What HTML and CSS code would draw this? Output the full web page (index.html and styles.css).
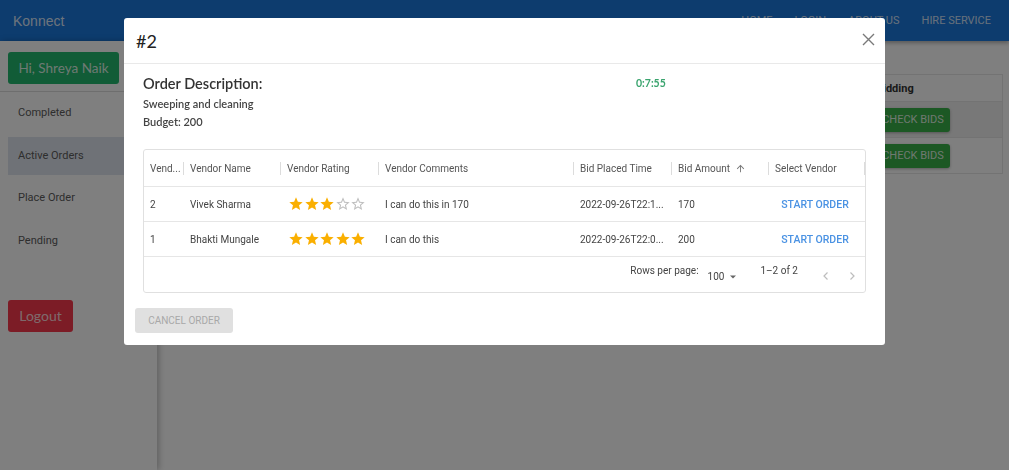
FILE: index.html
```html
<!DOCTYPE html>
<html>
<head>
<meta charset="utf-8">
<link rel="stylesheet" href="styles.css">
</head>
<body>
<header class="navbar">
  <div class="brand">Konnect</div>
  <nav class="links">
    <span>HOME</span><span>LOGIN</span><span>ABOUT US</span><span>HIRE SERVICE</span>
  </nav>
</header>
<div class="page">
  <aside class="sidebar">
    <div class="greet-wrap"><button class="greet">Hi, Shreya Naik</button></div>
    <ul class="menu">
      <li>Completed</li>
      <li class="active">Active Orders</li>
      <li>Place Order</li>
      <li>Pending</li>
    </ul>
    <button class="logout">Logout</button>
  </aside>
  <main class="main">
    <div class="orders">
      <div class="orow ohead"><span></span><span class="bidcol">Bidding</span></div>
      <div class="orow hover"><span></span><span class="bidcol"><button class="check">CHECK BIDS</button></span></div>
      <div class="orow"><span></span><span class="bidcol"><button class="check">CHECK BIDS</button></span></div>
    </div>
  </main>
</div>

<div class="overlay"></div>
<div class="modal">
  <div class="mhead">
    <h2>#2</h2>
    <svg class="close" width="13" height="13" viewBox="0 0 13 13"><path d="M1 1L12 12M12 1L1 12" stroke="#7a7a7a" stroke-width="1.4"/></svg>
  </div>
  <div class="mbody">
    <div class="titlerow">
      <h3>Order Description:</h3>
      <span class="timer">0:7:55</span>
    </div>
    <p class="info">Sweeping and cleaning</p>
    <p class="info">Budget: 200</p>

    <div class="grid">
      <div class="gr ghead">
        <div class="c">Vend...</div>
        <div class="c">Vendor Name</div>
        <div class="c">Vendor Rating</div>
        <div class="c">Vendor Comments</div>
        <div class="c">Bid Placed Time</div>
        <div class="c">Bid Amount <svg class="sort" width="11" height="11" viewBox="0 0 24 24"><path d="M4 12l1.41 1.41L11 7.830V20h2V7.83l5.58 5.59L20 12l-8-8-8 8z" fill="#777"/></svg></div>
        <div class="c">Select Vendor</div>
      </div>
      <div class="gr">
        <div class="c">2</div>
        <div class="c">Vivek Sharma</div>
        <div class="c stars">
          <svg viewBox="0 0 24 24"><path class="on" d="M12 17.27L18.18 21l-1.64-7.03L22 9.24l-7.19-.61L12 2 9.19 8.63 2 9.24l5.46 4.73L5.82 21z"/></svg>
          <svg viewBox="0 0 24 24"><path class="on" d="M12 17.27L18.18 21l-1.64-7.03L22 9.24l-7.19-.61L12 2 9.19 8.63 2 9.24l5.46 4.73L5.82 21z"/></svg>
          <svg viewBox="0 0 24 24"><path class="on" d="M12 17.27L18.18 21l-1.64-7.03L22 9.24l-7.19-.61L12 2 9.19 8.63 2 9.24l5.46 4.73L5.82 21z"/></svg>
          <svg viewBox="0 0 24 24"><path class="off" d="M22 9.24l-7.19-.62L12 2 9.19 8.63 2 9.24l5.46 4.73L5.82 21 12 17.27 18.18 21l-1.63-7.03L22 9.24zM12 15.4l-3.76 2.27 1-4.28-3.32-2.88 4.38-.38L12 6.1l1.71 4.04 4.38.38-3.32 2.88 1 4.28L12 15.4z"/></svg>
          <svg viewBox="0 0 24 24"><path class="off" d="M22 9.24l-7.19-.62L12 2 9.19 8.63 2 9.24l5.46 4.73L5.82 21 12 17.27 18.18 21l-1.63-7.03L22 9.24zM12 15.4l-3.76 2.27 1-4.28-3.32-2.88 4.38-.38L12 6.1l1.71 4.04 4.38.38-3.32 2.88 1 4.28L12 15.4z"/></svg>
        </div>
        <div class="c">I can do this in 170</div>
        <div class="c">2022-09-26T22:1...</div>
        <div class="c">170</div>
        <div class="c center"><span class="start">START ORDER</span></div>
      </div>
      <div class="gr">
        <div class="c">1</div>
        <div class="c">Bhakti Mungale</div>
        <div class="c stars">
          <svg viewBox="0 0 24 24"><path class="on" d="M12 17.27L18.18 21l-1.64-7.03L22 9.24l-7.19-.61L12 2 9.19 8.63 2 9.24l5.46 4.73L5.82 21z"/></svg>
          <svg viewBox="0 0 24 24"><path class="on" d="M12 17.27L18.18 21l-1.64-7.03L22 9.24l-7.19-.61L12 2 9.19 8.63 2 9.24l5.46 4.73L5.82 21z"/></svg>
          <svg viewBox="0 0 24 24"><path class="on" d="M12 17.27L18.18 21l-1.64-7.03L22 9.24l-7.19-.61L12 2 9.19 8.63 2 9.24l5.46 4.73L5.82 21z"/></svg>
          <svg viewBox="0 0 24 24"><path class="on" d="M12 17.27L18.18 21l-1.64-7.03L22 9.24l-7.19-.61L12 2 9.19 8.63 2 9.24l5.46 4.73L5.82 21z"/></svg>
          <svg viewBox="0 0 24 24"><path class="on" d="M12 17.27L18.18 21l-1.64-7.03L22 9.24l-7.19-.61L12 2 9.19 8.63 2 9.24l5.46 4.73L5.82 21z"/></svg>
        </div>
        <div class="c">I can do this</div>
        <div class="c">2022-09-26T22:0...</div>
        <div class="c">200</div>
        <div class="c center"><span class="start">START ORDER</span></div>
      </div>
      <div class="gfoot">
        <span class="rpp">Rows per page:</span>
        <span class="sel">100 <svg width="8" height="8" viewBox="0 0 8 8"><path d="M1 2.5h6L4 5.5z" fill="#666"/></svg></span>
        <span class="range">1–2 of 2</span>
        <span class="pager">
          <svg width="10" height="10" viewBox="0 0 10 10"><path d="M6.5 1.5L3 5l3.5 3.5" fill="none" stroke="#bdbdbd" stroke-width="1.2"/></svg>
          <svg width="10" height="10" viewBox="0 0 10 10"><path d="M3.5 1.5L7 5 3.5 8.5" fill="none" stroke="#bdbdbd" stroke-width="1.2"/></svg>
        </span>
      </div>
    </div>
  </div>
  <div class="mfoot">
    <button class="cancel" disabled>CANCEL ORDER</button>
  </div>
</div>
</body>
</html>
```

FILE: styles.css
```css
* { box-sizing: border-box; }
html, body { margin: 0; padding: 0; }
body {
  width: 1009px;
  height: 470px;
  overflow: hidden;
  background: #ffffff;
  font-family: Roboto, "Liberation Sans", Arial, sans-serif;
}
.navbar {
  height: 41px;
  background: #1a78dc;
  display: flex;
  align-items: center;
  justify-content: space-between;
  padding: 0 18px 0 13px;
  box-shadow: 0 2px 4px rgba(0,0,0,0.3);
  position: relative;
  z-index: 1;
}
.brand {
  color: rgba(255,255,255,0.85);
  font-size: 14px;
  font-family: "Liberation Sans", Arial, sans-serif;
}
.links { display: flex; gap: 22px; }
.links span {
  color: rgba(255,255,255,0.8);
  font-size: 11px;
  font-family: Roboto, "Liberation Sans", sans-serif;
}
.page { display: flex; height: 429px; }
.sidebar {
  width: 157px;
  flex: none;
  background: #ffffff;
  box-shadow: 2px 0 6px rgba(0,0,0,0.25);
  display: flex;
  flex-direction: column;
  position: relative;
  z-index: 1;
}
.greet-wrap {
  padding: 11px 0 7px 8px;
  border-bottom: 1px solid #dddddd;
}
.greet {
  background: #22b86e;
  color: rgba(255,255,255,0.85);
  border: none;
  border-radius: 3px;
  height: 32px;
  width: 111px;
  font-family: Lato, "Open Sans", sans-serif;
  font-size: 13.5px;
  padding: 0;
}
.menu { list-style: none; margin: 2px 0 0 0; padding: 0; }
.menu li {
  height: 38px;
  line-height: 38px;
  margin-bottom: 4.7px;
  padding-left: 18px;
  font-size: 11px;
  color: #5c5c5c;
}
.menu li.active { background: #dfe5ee; margin-left: 8px; padding-left: 10px; }
.logout {
  margin: 35px 0 0 8px;
  width: 65px;
  height: 32px;
  background: #f8384c;
  color: rgba(255,255,255,0.8);
  border: none;
  border-radius: 3px;
  font-family: Lato, "Open Sans", sans-serif;
  font-size: 14px;
  padding: 0;
}
.main { flex: 1; padding: 33px 6px 0 11px; }
.orders {
  border: 1px solid #e6e6e6;
}
.orow {
  display: grid;
  grid-template-columns: 1fr 132px;
  height: 36px;
  align-items: center;
  border-top: 1px solid #e6e6e6;
}
.orow.ohead { height: 26px; border-top: none; }
.orow.hover { background: #f0f0f0; }
.bidcol { font-size: 11px; font-weight: bold; color: #333; padding-left: 6px; }
.check {
  background: #38b048;
  color: rgba(255,255,255,0.85);
  border: none;
  border-radius: 3px;
  height: 24px;
  width: 74px;
  font-family: Roboto, sans-serif;
  font-size: 11px;
  padding: 0;
  box-shadow: 0 1px 3px rgba(0,0,0,0.3);
}
.overlay {
  position: fixed;
  inset: 0;
  background: rgba(0,0,0,0.5);
  z-index: 5;
}
.modal {
  position: absolute;
  left: 124px;
  top: 18px;
  width: 761px;
  height: 327px;
  background: #fff;
  border-radius: 3px;
  z-index: 6;
  display: flex;
  flex-direction: column;
  font-family: Lato, "Open Sans", sans-serif;
}
.mhead {
  height: 46px;
  border-bottom: 1px solid #e9e9e9;
  display: flex;
  align-items: center;
  justify-content: space-between;
  padding: 0 10px 0 12px;
}
.mhead h2 {
  margin: 0;
  font-size: 18px;
  font-weight: normal;
  color: #222;
}
.close { margin-top: -2px; }
.mbody { padding: 9px 19px 0 19px; }
.titlerow { display: flex; align-items: center; height: 20px; }
.titlerow h3 {
  margin: 0;
  width: 493px;
  font-size: 14.5px;
  font-weight: 600;
  color: #333;
}
.timer { color: #3aa46e; font-size: 10.5px; font-weight: bold; }
.info {
  margin: 0;
  font-size: 11px;
  font-weight: 600;
  color: #444;
  height: 18px;
  line-height: 18px;
}
.info:first-of-type { margin-top: 2px; }
.grid {
  margin-top: 18px;
  border: 1px solid #e0e0e0;
  border-radius: 3px;
  font-family: Roboto, "Liberation Sans", sans-serif;
  font-size: 10px;
  color: #444;
}
.gr {
  display: grid;
  grid-template-columns: 40px 97px 98px 195px 98px 97px 96px;
  height: 35px;
  align-items: center;
  border-bottom: 1px solid #e6e6e6;
}
.gr.ghead { height: 37px; color: #555; }
.c { padding: 0 6px 0 6px; white-space: nowrap; overflow: hidden; display: flex; align-items: center; gap: 4px; }
.ghead .c { position: relative; height: 100%; }
.ghead .c::after {
  content: "";
  position: absolute;
  right: 0;
  top: 12px;
  height: 13px;
  width: 1px;
  background: #dcdcdc;
}
.sort { margin-left: 1px; }
.stars { gap: 0; padding-left: 7px; }
.stars svg { width: 16px; height: 16px; margin-right: -0.5px; }
.stars .on { fill: #faaf00; }
.stars .off { fill: #bfbfbf; }
.center { justify-content: center; }
.start { color: #4a92e3; font-weight: 500; font-size: 10.5px; margin-left: -4px; }
.gfoot {
  height: 35px;
  display: flex;
  align-items: center;
  justify-content: flex-end;
  padding-right: 8px;
  color: #444;
}
.rpp { margin-top: -9px; }
.sel { margin-left: 9px; margin-top: 4px; display: flex; align-items: center; gap: 5px; }
.range { margin-left: 23px; margin-top: -9px; }
.pager { margin-left: 23px; display: flex; gap: 16px; margin-top: 3px; }
.mfoot { padding: 15px 11px 0 11px; }
.cancel {
  background: #e0e0e0;
  color: #a8a8a8;
  border: none;
  border-radius: 3px;
  height: 25px;
  width: 98px;
  padding: 0;
  font-family: Roboto, sans-serif;
  font-size: 10px;
}
```
